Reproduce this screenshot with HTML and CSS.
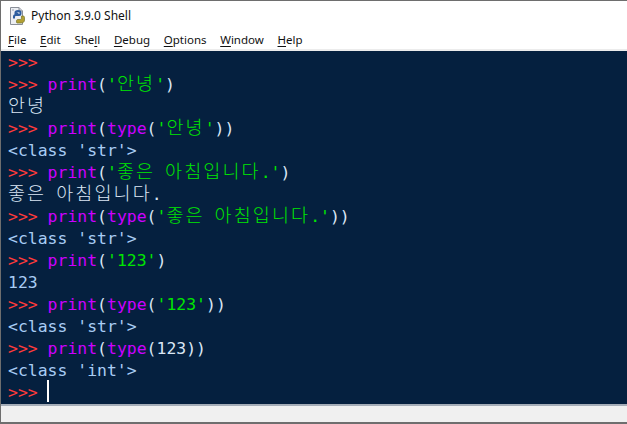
FILE: index.html
```html
<!DOCTYPE html>
<html lang="ko">
<head>
<meta charset="utf-8">
<title>Python 3.9.0 Shell</title>
<link rel="stylesheet" href="styles.css">
</head>
<body>
<div class="window">
  <div class="titlebar">
    <svg class="app-icon" width="17" height="18" viewBox="0 0 17 18">
      <path d="M1.500 .5H10L13.500 4V17.500H1.500Z" fill="#eceef2" stroke="#8a8f98"/>
      <path d="M10 .5V4H13.500" fill="#c9ccd3" stroke="#8a8f98"/>
      <path d="M3 4H5V2H3Z" fill="#c5cad4"/>
      <path d="M5 11.500V9.500C5 8.500 6 8 7 8H10C11 8 11.500 7.500 11.500 6.500V5.500C11.500 4.500 10.500 4 9 4C7.500 4 6.500 4.500 6.500 5.500V6.500H9.500" fill="none" stroke="#2d5d9f" stroke-width="2"/>
      <path d="M8 16H12C14 16 15.500 15 15.500 13V10.500C15.500 9.500 15 9 14 9H12.500V11C12.500 12 12 12.500 11 12.500H9C8 12.500 7.500 13 7.500 14V15C7.500 15.500 7.800 16 8 16Z" fill="#b3a032" stroke="#77752b" stroke-width=".7"/>
    </svg>
    <span class="title">Python 3.9.0 Shell</span>
  </div>
  <nav class="menubar">
    <span class="menu"><u>F</u>ile</span>
    <span class="menu"><u>E</u>dit</span>
    <span class="menu">She<u>l</u>l</span>
    <span class="menu"><u>D</u>ebug</span>
    <span class="menu"><u>O</u>ptions</span>
    <span class="menu"><u>W</u>indow</span>
    <span class="menu"><u>H</u>elp</span>
  </nav>
  <main class="shell">
    <div class="line"><span class="pr">&gt;&gt;&gt;</span></div>
    <div class="line"><span class="pr">&gt;&gt;&gt;</span> <span class="kw">print</span><span class="tx">(</span><span class="st">'<span class="ko">안녕</span>'</span><span class="tx">)</span></div>
    <div class="line out"><span class="ko">안녕</span></div>
    <div class="line"><span class="pr">&gt;&gt;&gt;</span> <span class="kw">print</span><span class="tx">(</span><span class="kw">type</span><span class="tx">(</span><span class="st">'<span class="ko">안녕</span>'</span><span class="tx">))</span></div>
    <div class="line res">&lt;class 'str'&gt;</div>
    <div class="line"><span class="pr">&gt;&gt;&gt;</span> <span class="kw">print</span><span class="tx">(</span><span class="st">'<span class="ko">좋은</span> <span class="ko">아침입니다</span>.'</span><span class="tx">)</span></div>
    <div class="line out"><span class="ko">좋은</span> <span class="ko">아침입니다</span>.</div>
    <div class="line"><span class="pr">&gt;&gt;&gt;</span> <span class="kw">print</span><span class="tx">(</span><span class="kw">type</span><span class="tx">(</span><span class="st">'<span class="ko">좋은</span> <span class="ko">아침입니다</span>.'</span><span class="tx">))</span></div>
    <div class="line res">&lt;class 'str'&gt;</div>
    <div class="line"><span class="pr">&gt;&gt;&gt;</span> <span class="kw">print</span><span class="tx">(</span><span class="st">'123'</span><span class="tx">)</span></div>
    <div class="line res">123</div>
    <div class="line"><span class="pr">&gt;&gt;&gt;</span> <span class="kw">print</span><span class="tx">(</span><span class="kw">type</span><span class="tx">(</span><span class="st">'123'</span><span class="tx">))</span></div>
    <div class="line res">&lt;class 'str'&gt;</div>
    <div class="line"><span class="pr">&gt;&gt;&gt;</span> <span class="kw">print</span><span class="tx">(</span><span class="kw">type</span><span class="tx">(123))</span></div>
    <div class="line res">&lt;class 'int'&gt;</div>
    <div class="line"><span class="pr">&gt;&gt;&gt;</span> <span class="caret"></span></div>
  </main>
  <div class="statusbar"></div>
</div>
</body>
</html>
```
FILE: styles.css
```css
html, body {
  margin: 0;
  padding: 0;
}
.window {
  width: 627px;
  height: 424px;
  box-sizing: border-box;
  border-top: 1px solid #6e6e6e;
  border-bottom: 2px solid #6e6e6e;
  border-left: 1px solid #6e6e6e;
  display: flex;
  flex-direction: column;
  background: #fff;
  overflow: hidden;
}
.titlebar {
  height: 29px;
  display: flex;
  align-items: center;
  gap: 5px;
  padding-left: 8px;
  box-sizing: border-box;
}
.app-icon {
  display: block;
}
.title {
  font: 12px "Noto Sans", "Open Sans", sans-serif;
  color: #111;
}
.menubar {
  height: 19px;
  display: flex;
  align-items: center;
  gap: 13.7px;
  padding-left: 7px;
  font: 11.5px "Noto Sans", "Open Sans", sans-serif;
  color: #111;
  border-bottom: 2px solid #ececec;
}
.menu u {
  text-underline-offset: 2px;
}
.shell {
  height: 355px;
  box-sizing: border-box;
  background: #05203f;
  border-bottom: 2px solid #a5adb8;
  padding-left: 7px;
  font: 16.45px/24px "DejaVu Sans Mono", monospace;
  color: #dbe6f5;
  display: flex;
  flex-direction: column;
  flex: none;
}
.line {
  height: 22px;
  white-space: pre;
}
.ko {
  font-family: "Noto Sans CJK KR", sans-serif;
  font-size: 18.5px;
  letter-spacing: 2.1px;
  line-height: 0;
  font-weight: 300;
}
.pr { color: #ff3b3b; }
.kw { color: #cc00ff; }
.st { color: #00e600; }
.tx { color: #dbe6f5; }
.out { color: #dbe6f5; }
.res { color: #a9cdf5; }
.caret {
  display: inline-block;
  width: 2px;
  height: 22px;
  margin: -1px 0 0 -1px;
  background: #fff;
  vertical-align: top;
}
.statusbar {
  flex: 1;
  background: #f0f0f0;
}
```
